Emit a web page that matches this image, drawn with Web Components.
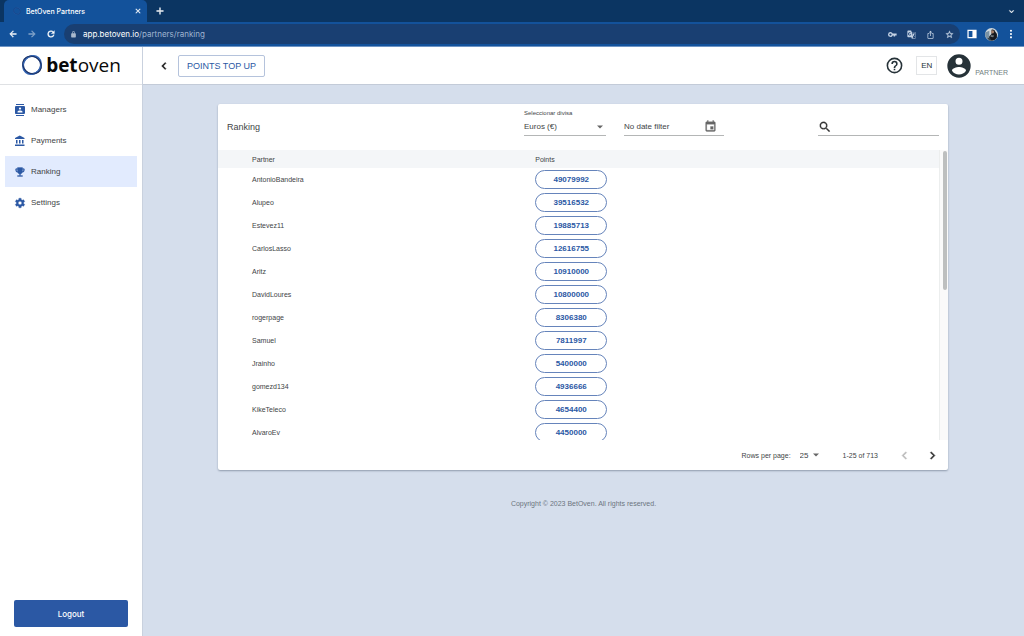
<!DOCTYPE html>
<html lang="en">
<head>
<meta charset="utf-8">
<meta name="viewport" content="width=device-width, initial-scale=1">
<title>BetOven Partners</title>
<style>
  body {
    margin: 0;
    --blue: #2b58a4;
    --ink: #263238;
    font-family: "Liberation Sans", Arial, sans-serif;
    color: #414446;
  }
</style>
</head>
<body>
<partner-app></partner-app>

<script>
const paths = {
  back: '<path d="M20 11H7.800l5.600-5.600L12 4l-8 8 8 8 1.400-1.400L7.800 13H20z" stroke="currentColor"/>',
  forward: '<path d="m12 4-1.400 1.400 5.600 5.600H4v2h12.200l-5.600 5.600L12 20l8-8z" stroke="currentColor"/>',
  reload: '<path d="M17.650 6.350A7.950 7.950 0 0 0 12 4a8 8 0 1 0 7.730 10h-2.080A6 6 0 1 1 12 6c1.660 0 3.140.690 4.220 1.780L13 11h7V4z" stroke="currentColor"/>',
  lock: '<path d="M18 8h-1V6A5 5 0 0 0 7 6v2H6a2 2 0 0 0-2 2v10c0 1.100.900 2 2 2h12a2 2 0 0 0 2-2V10a2 2 0 0 0-2-2zM9 6a3 3 0 0 1 6 0v2H9z"/>',
  close: '<path d="M19 6.400 17.600 5 12 10.600 6.400 5 5 6.400l5.600 5.600L5 17.600 6.400 19l5.600-5.600 5.600 5.600 1.400-1.400-5.600-5.600z" stroke="currentColor"/>',
  plus: '<path d="M20 13h-7v7h-2v-7H4v-2h7V4h2v7h7z" stroke="currentColor"/>',
  down: '<path d="M7.400 8.600 12 13.200l4.600-4.600L18 10l-6 6-6-6z" stroke="currentColor"/>',
  key: '<path fill-rule="evenodd" d="M6.500 5.500a6.500 6.500 0 1 0 6.100 9H15v3h4v-3h4v-5H12.600a6.500 6.500 0 0 0-6.100-4zm0 3.500a3 3 0 1 1 0 6 3 3 0 0 1 0-6z"/>',
  translate: '<path fill-rule="evenodd" d="M3 1h8l1.500 4H21a2 2 0 0 1 2 2v14a2 2 0 0 1-2 2h-8l-1.500-4H3a2 2 0 0 1-2-2V3a2 2 0 0 1 2-2zm4 5a4.200 4.200 0 1 0 4.200 5H7v1.700h2.300A2.500 2.500 0 1 1 8.700 8.500L10 7.200A4.200 4.200 0 0 0 7 6zm6.200 1 3.600 12-2.600 3H21a1 1 0 0 0 1-1V7a1 1 0 0 0-1-1h-8z"/><path d="M15 9h6v1.500h-1c-.3 1.500-1 2.800-1.900 3.900l2.400 2.400-1 1-4-4z"/>',
  share: '<path d="M16 6l-1.400 1.400L13 5.800V16h-2V5.800L9.400 7.400 8 6l4-4zm4 4v11a2 2 0 0 1-2 2H6a2 2 0 0 1-2-2V10a2 2 0 0 1 2-2h3v2H6v11h12V10h-3V8h3a2 2 0 0 1 2 2z"/>',
  star: '<path d="m22 9.200-7.200-.6L12 2 9.200 8.600 2 9.200l5.500 4.800-1.700 7L12 17.300l6.200 3.700-1.600-7zM12 15.400l-3.800 2.300 1-4.300-3.300-2.900 4.400-.4L12 6.100l1.700 4 4.400.4-3.300 2.900 1 4.300z" stroke="currentColor" stroke-width=".8"/>',
  panel: '<path fill-rule="evenodd" d="M1 2h22v20H1zm3 3v14h9V5z"/>',
  dots: '<circle cx="12" cy="4" r="2.500"/><circle cx="12" cy="12" r="2.500"/><circle cx="12" cy="20" r="2.500"/>',
  photo: '<circle cx="12" cy="12" r="12" fill="#cfd8dd"/><path d="M1 8 8 5v13H2a12 12 0 0 1-1-10z" fill="#7992a4"/><path d="M12 3c3-1 6 0 7 4l3 4v7a12 12 0 0 1-15 4l1-7 4-4z" fill="#16191f"/><circle cx="14" cy="7" r="3" fill="#a17d68"/><path d="m11 13 6 1-2 3-5-1z" fill="#6f777d"/><path d="M3 18h6l2 4-3 1z" fill="#35454f"/>',
  left: '<path d="M15.400 7.400 14 6l-6 6 6 6 1.400-1.400-4.600-4.600z" stroke="currentColor" stroke-width=".8"/>',
  right: '<path d="m10 6-1.400 1.400 4.600 4.600-4.600 4.600L10 18l6-6z" stroke="currentColor" stroke-width=".8"/>',
  help: '<path d="M11 18h2v-2h-2zm1-16a10 10 0 1 0 0 20 10 10 0 0 0 0-20zm0 18a8 8 0 1 1 0-16 8 8 0 0 1 0 16zm0-14a4 4 0 0 0-4 4h2a2 2 0 1 1 4 0c0 2-3 1.750-3 5h2c0-2.250 3-2.500 3-5a4 4 0 0 0-4-4z"/>',
  person: '<path d="M12 2a10 10 0 1 0 0 20 10 10 0 0 0 0-20zm0 3a3 3 0 1 1 0 6 3 3 0 0 1 0-6zm0 14.200a7.200 7.200 0 0 1-6-3.220c.03-1.990 4-3.080 6-3.080s5.970 1.090 6 3.080a7.200 7.200 0 0 1-6 3.220z"/>',
  contacts: '<path d="M20 0H4v2h16zM4 24h16v-2H4zM20 4H4a2 2 0 0 0-2 2v12c0 1.100.900 2 2 2h16a2 2 0 0 0 2-2V6a2 2 0 0 0-2-2zm-8 2.750a2.250 2.250 0 1 1 0 4.500 2.250 2.250 0 0 1 0-4.500zM17 17H7v-1.500c0-1.670 3.330-2.500 5-2.500s5 .830 5 2.500z"/>',
  bank: '<path d="M4 10v7h3v-7zm6 0v7h3v-7zM2 22h19v-3H2zm14-12v7h3v-7zM11.500 1 2 6v2h19V6z"/>',
  trophy: '<path d="M19 5h-2V3H7v2H5a2 2 0 0 0-2 2v1a5 5 0 0 0 4.400 4.900A5 5 0 0 0 11 15.900V19H7v2h10v-2h-4v-3.100a5 5 0 0 0 3.600-3A5 5 0 0 0 21 8V7a2 2 0 0 0-2-2zM5 8V7h2v3.800A3 3 0 0 1 5 8zm14 0a3 3 0 0 1-2 2.800V7h2z" stroke="currentColor" stroke-width=".6"/>',
  gear: '<path d="M19.140 12.940a7 7 0 0 0 0-1.880l2.030-1.580a.5.5 0 0 0 .12-.61l-1.920-3.320a.5.5 0 0 0-.59-.22l-2.390.96a7 7 0 0 0-1.620-.94l-.36-2.540a.5.5 0 0 0-.48-.41h-3.840a.5.5 0 0 0-.47.41l-.36 2.540a7 7 0 0 0-1.620.94l-2.390-.96a.5.5 0 0 0-.59.220L2.740 8.870a.5.5 0 0 0 .12.610l2.030 1.580a7 7 0 0 0 0 1.880l-2.030 1.580a.5.5 0 0 0-.12.610l1.920 3.320c.12.220.37.290.59.220l2.390-.96c.5.380 1.030.7 1.620.94l.36 2.540c.05.240.24.410.48.410h3.840c.24 0 .44-.17.470-.41l.36-2.540a7 7 0 0 0 1.620-.94l2.390.96c.22.080.47 0 .59-.22l1.920-3.320a.5.5 0 0 0-.12-.61zM12 15.600a3.600 3.600 0 1 1 0-7.200 3.600 3.600 0 0 1 0 7.200z" stroke="currentColor" stroke-width=".6"/>',
  calendar: '<path d="M17 12h-5v5h5zM16 1v2H8V1H6v2H5a2 2 0 0 0-2 2v14a2 2 0 0 0 2 2h14a2 2 0 0 0 2-2V5a2 2 0 0 0-2-2h-1V1zm3 18H5V8h14z" stroke="currentColor" stroke-width=".5"/>',
  search: '<path d="M15.500 14h-.79l-.28-.27a6.500 6.500 0 1 0-.7.700l.27.280v.79l5 5 1.490-1.500zm-6 0a4.500 4.500 0 1 1 0-9 4.500 4.500 0 0 1 0 9z" stroke="currentColor" stroke-width=".5"/>',
  caret: '<path d="m6 9 6 6 6-6z"/>',
  swirl: '<g fill="none"><circle cx="12" cy="12" r="9.700" stroke="#24488f" stroke-width="2"/><ellipse cx="12" cy="12" rx="10.800" ry="9.300" transform="rotate(-50 12 12)" stroke="#3566b4" stroke-width="1.500"/><ellipse cx="12" cy="12" rx="10.700" ry="9.200" transform="rotate(35 12 12)" stroke="#1b2f5d" stroke-width="1"/></g>'
};

/* Shared by every component: renders its template into an open shadow root. */
class Base extends HTMLElement {
  connectedCallback() {
    if (this.shadowRoot) return;
    const t = document.createElement('template');
    t.innerHTML = `<style>
      *{box-sizing:border-box}
      button,input,select{font:inherit;color:inherit;background:none;border:0;padding:0;margin:0;outline:0}
      button{display:flex;align-items:center;justify-content:center}
      a{color:inherit;text-decoration:none}
      ${this.css()}</style>${this.html()}`;
    this.attachShadow({ mode: 'open' }).append(t.content.cloneNode(true));
  }
  css() { return ''; }
  html() { return '<slot></slot>'; }
}

customElements.define('ui-icon', class extends Base {
  css() { return `:host{display:block;flex:none;width:var(--size,12px);height:var(--size,12px)} svg{display:block;width:100%;height:100%;fill:currentColor}`; }
  html() { return `<svg viewBox="0 0 24 24" aria-hidden="true">${paths[this.getAttribute('name')]}</svg>`; }
});

customElements.define('browser-bar', class extends Base {
  css() { return `
    :host{display:block;background:#0b3562;color:#fff;font-family:Inter,sans-serif;border-bottom:1px solid #6e94c4}
    .tabs{display:flex;align-items:center;height:22px;padding:0 8px 0 4px}
    .tab{display:flex;align-items:center;justify-content:space-between;width:143px;height:22px;margin-right:8px;padding:0 5px 0 9px;background:#13529b;border-radius:5px 5px 0 0;font-size:7px;font-weight:500}
    .title{display:flex;align-items:center;gap:5px}
    .fav{--size:8px;opacity:.5}
    .close{--size:8px}
    .new{--size:10px}
    .more{--size:9px;margin-left:auto}
    .tools{display:flex;align-items:center;height:24px;padding:0 8px;background:#13529b}
    .nav{display:flex;align-items:center;gap:9px;--size:10px}
    .dim{opacity:.5}
    .address{flex:1;display:flex;align-items:center;height:20px;margin:0 7px 0 8px;padding:0 6px;border-radius:10px;background:#193f72;font-size:8px}
    .lock{--size:7px;color:#aab9cd;margin-right:6px}
    .path{color:#9fb4d0}
    .actions{display:flex;align-items:center;gap:10px;margin-left:auto;color:#c4d2e4;--size:9px}
    .end{display:flex;align-items:center;gap:8px;--size:10px}
    .avatar{--size:13px}`; }
  html() { return `
    <div class="tabs">
      <div class="tab"><span class="title"><ui-icon class="fav" name="swirl"></ui-icon>BetOven Partners</span>
        <button class="close" aria-label="Close tab"><ui-icon name="close"></ui-icon></button></div>
      <button class="new" aria-label="New tab"><ui-icon name="plus"></ui-icon></button>
      <button class="more" aria-label="Search tabs"><ui-icon name="down"></ui-icon></button>
    </div>
    <div class="tools">
      <div class="nav">
        <button aria-label="Back"><ui-icon name="back"></ui-icon></button>
        <button class="dim" aria-label="Forward"><ui-icon name="forward"></ui-icon></button>
        <button aria-label="Reload"><ui-icon name="reload"></ui-icon></button>
      </div>
      <div class="address"><ui-icon class="lock" name="lock"></ui-icon><span>app.betoven.io<span class="path">/partners/ranking</span></span>
        <div class="actions">
          <button aria-label="Passwords"><ui-icon name="key"></ui-icon></button>
          <button aria-label="Translate"><ui-icon name="translate"></ui-icon></button>
          <button aria-label="Share"><ui-icon name="share"></ui-icon></button>
          <button aria-label="Bookmark"><ui-icon name="star"></ui-icon></button>
        </div>
      </div>
      <div class="end">
        <button aria-label="Side panel"><ui-icon name="panel"></ui-icon></button>
        <button class="avatar" aria-label="Profile"><ui-icon name="photo"></ui-icon></button>
        <button aria-label="Menu"><ui-icon name="dots"></ui-icon></button>
      </div>
    </div>`; }
});

customElements.define('nav-item', class extends Base {
  css() { return `
    :host{display:block}
    a{display:flex;align-items:center;gap:5px;height:31px;padding:0 9px;font-size:8px}
    ui-icon{--size:12px;color:var(--blue)}
    :host([active]) a{background:#e2ebfe}`; }
  html() { return `<a href="#${this.getAttribute('icon')}"><ui-icon name="${this.getAttribute('icon')}"></ui-icon><slot></slot></a>`; }
});

customElements.define('side-bar', class extends Base {
  css() { return `
    :host{display:flex;flex-direction:column;flex:none;width:143px;background:#fff;border-right:1px solid #c9d1de}
    .logo{display:flex;align-items:center;justify-content:center;gap:3px;height:38px;padding-bottom:2px;border-bottom:1px solid #dfe1e4;color:#090909;font:400 19px/24px "Open Sans",sans-serif}
    .logo ui-icon{--size:22px}
    b{font-weight:700}
    nav{padding:9px 5px}
    .logout{margin:auto 14px 9px;height:27px;border-radius:2px;background:var(--blue);color:#fff;font-family:Inter,sans-serif;font-size:8px;font-weight:500}`; }
  html() { return `
    <a class="logo" href="#home"><ui-icon name="swirl"></ui-icon><span><b>bet</b>oven</span></a>
    <nav>
      <nav-item icon="contacts">Managers</nav-item>
      <nav-item icon="bank">Payments</nav-item>
      <nav-item icon="trophy" active>Ranking</nav-item>
      <nav-item icon="gear">Settings</nav-item>
    </nav>
    <button class="logout">Logout</button>`; }
});

customElements.define('top-bar', class extends Base {
  css() { return `
    :host{display:flex;align-items:center;height:38px;padding:0 16px 0 14px;background:#fff;border-bottom:1px solid #c3cbd8}
    .back{--size:14px;color:#111;margin-right:7px}
    .top-up{height:22px;padding:0 8px;border:1px solid #b5c3dc;border-radius:2px;color:var(--blue);font-size:9px}
    .right{display:flex;align-items:center;margin-left:auto;color:var(--ink)}
    .help{--size:19px;margin-right:12px}
    .lang{width:21px;height:19px;margin-right:8px;border:1px solid #e3e5e7;font-size:8px}
    .user{gap:2px}
    .user ui-icon{--size:28px}
    .role{padding-top:14px;color:#72807f;font-size:7px}`; }
  html() { return `
    <button class="back" aria-label="Back"><ui-icon name="left"></ui-icon></button>
    <button class="top-up">POINTS TOP UP</button>
    <div class="right">
      <button class="help" aria-label="Help"><ui-icon name="help"></ui-icon></button>
      <button class="lang">EN</button>
      <button class="user"><ui-icon name="person"></ui-icon><span class="role">PARTNER</span></button>
    </div>`; }
});

customElements.define('points-pill', class extends Base {
  css() { return `
    :host{display:block;width:72px}
    button{width:100%;height:19px;border:1px solid #6684bb;border-radius:10px;color:var(--blue);font-size:8px;font-weight:700}`; }
  html() { return '<button><slot></slot></button>'; }
});

customElements.define('ranking-table', class extends Base {
  css() { return `
    :host{display:flex}
    .scroll{flex:1;max-height:290px;overflow:auto;scrollbar-width:none}
    table{width:100%;border-collapse:collapse;table-layout:fixed;font-size:7px}
    th{height:18px;background:#f4f6f8;font-weight:400}
    th,td{padding:0;text-align:left}
    th:first-child,td:first-child{width:44%;padding-left:34px}
    td{height:23px}
    .track{width:9px;padding:1px 1px 0 3px;border-left:1px solid #eceeee;background:#fafafa}
    .thumb{height:48%;border-radius:3px;background:#bdbfbf}`; }
  html() {
    const rows = [['AntonioBandeira', 49079992], ['Alupeo', 39516532], ['Estevez11', 19885713], ['CarlosLasso', 12616755],
      ['Aritz', 10910000], ['DavidLoures', 10800000], ['rogerpage', 8306380], ['Samuel', 7811997], ['Jrainho', 5400000],
      ['gomezd134', 4936666], ['KikeTeleco', 4654400], ['AlvaroEv', 4450000]];
    return `<div class="scroll"><table><thead><tr><th scope="col">Partner</th><th scope="col">Points</th></tr></thead>
      <tbody>${rows.map(([n, p]) => `<tr><td>${n}</td><td><points-pill>${p}</points-pill></td></tr>`).join('')}</tbody></table></div>
      <div class="track"><div class="thumb"></div></div>`;
  }
});

customElements.define('ranking-card', class extends Base {
  css() { return `
    :host{display:block;background:#fff;border-radius:2px;box-shadow:0 1px 2px #8f9bad}
    .filters{display:flex;align-items:flex-start;height:46px;padding:4px 9px 0}
    h1{flex:1;margin:0;padding-top:13px;font-size:9px;line-height:12px;font-weight:400}
    .field{display:flex;flex-direction:column;margin-right:18px;font-size:6px;line-height:10px}
    .line{display:flex;align-items:center;height:18px;border-bottom:1px solid #b4b6b6;font-size:8px}
    .line input{flex:1;min-width:0}
    select{appearance:none;flex:1}
    .line ui-icon,.rows ui-icon{--size:12px;color:#666;pointer-events:none}
    .currency{width:82px}
    .date{width:100px;margin:10px 94px 0 0}
    .date ui-icon{--size:13px}
    .date button{margin-right:7px}
    .search{width:121px;margin-top:10px}
    .search ui-icon{--size:14px;color:#333}
    .pager{display:flex;align-items:center;justify-content:flex-end;height:30px;padding:0 8px;font-size:7px}
    .rows{display:flex;align-items:center;gap:1px;margin:0 21px 0 9px;font-size:8px}
    .pager button{--size:15px;color:#333}
    .pager .prev{margin:0 13px 0 19px;color:#bbb}`; }
  html() { return `
    <div class="filters">
      <h1>Ranking</h1>
      <div class="field currency"><label for="currency">Seleccionar divisa</label>
        <div class="line"><select id="currency"><option>Euros (€)</option></select><ui-icon name="caret"></ui-icon></div></div>
      <div class="line date"><input aria-label="Date filter" value="No date filter" readonly><button aria-label="Choose dates"><ui-icon name="calendar"></ui-icon></button></div>
      <div class="line search"><ui-icon name="search"></ui-icon><input type="search" aria-label="Search"></div>
    </div>
    <ranking-table></ranking-table>
    <div class="pager">
      <label for="rows">Rows per page:</label>
      <div class="rows"><select id="rows"><option>25</option></select><ui-icon name="caret"></ui-icon></div>
      <span>1-25 of 713</span>
      <button class="prev" aria-label="Previous page" disabled><ui-icon name="left"></ui-icon></button>
      <button aria-label="Next page"><ui-icon name="right"></ui-icon></button>
    </div>`; }
});

customElements.define('partner-app', class extends Base {
  css() { return `
    :host{display:flex;flex-direction:column;min-height:100vh;background:#d5deec}
    .body{flex:1;display:flex}
    main{flex:1;min-width:0}
    ranking-card{margin:19px 76px 0 75px}
    footer{margin-top:29px;color:#6c7580;font-size:7px;line-height:10px;text-align:center}`; }
  html() { return `
    <browser-bar></browser-bar>
    <div class="body">
      <side-bar></side-bar>
      <main>
        <top-bar></top-bar>
        <ranking-card></ranking-card>
        <footer>Copyright © 2023 BetOven. All rights reserved.</footer>
      </main>
    </div>`; }
});
</script>
</body>
</html>
